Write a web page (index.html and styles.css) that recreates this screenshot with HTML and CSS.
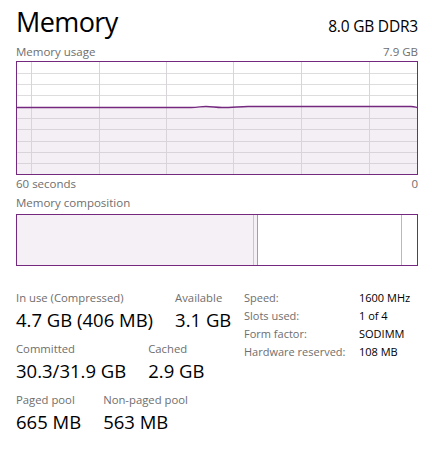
FILE: index.html
```html
<!DOCTYPE html>
<html>
<head>
<meta charset="utf-8">
<link rel="stylesheet" href="styles.css">
</head>
<body>
<div class="page">
  <div class="header">
    <div class="title">Memory</div>
    <div class="spec">8.0 GB DDR3</div>
  </div>
  <div class="caption-row">
    <span>Memory usage</span>
    <span>7.9 GB</span>
  </div>
  <svg class="graph" width="402" height="114" viewBox="0 0 402 114">
    <g stroke="#dedcdf" stroke-width="1">
      <line x1="0" y1="12.5" x2="402" y2="12.5"/>
      <line x1="0" y1="23.5" x2="402" y2="23.5"/>
      <line x1="0" y1="34.5" x2="402" y2="34.5"/>
      <line x1="0" y1="57.5" x2="402" y2="57.5"/>
      <line x1="0" y1="68.5" x2="402" y2="68.5"/>
      <line x1="0" y1="80.5" x2="402" y2="80.5"/>
      <line x1="0" y1="91.5" x2="402" y2="91.5"/>
      <line x1="0" y1="102.5" x2="402" y2="102.5"/>
    </g>
    <path d="M1 46.5 L175 46.5 C182 46.5 185 45.5 190 45.5 C196 45.5 200 46.5 206 46.5 C215 46.5 222 45.8 232 45.5 L395 45.5 C398 45.5 399 46 401 46.5 L401 113 L1 113 Z" fill="#f3eff4"/>
    <g stroke="#d8d4da" stroke-width="1">
      <line x1="15.5" y1="0" x2="15.5" y2="114"/>
      <line x1="83.5" y1="0" x2="83.5" y2="114"/>
      <line x1="150.5" y1="0" x2="150.5" y2="114"/>
      <line x1="217.5" y1="0" x2="217.5" y2="114"/>
      <line x1="285.5" y1="0" x2="285.5" y2="114"/>
      <line x1="353.5" y1="0" x2="353.5" y2="114"/>
    </g>
    <g stroke="#d8d4da" stroke-width="1">
      <line x1="0" y1="57.5" x2="402" y2="57.5"/>
      <line x1="0" y1="68.5" x2="402" y2="68.5"/>
      <line x1="0" y1="80.5" x2="402" y2="80.5"/>
      <line x1="0" y1="91.5" x2="402" y2="91.5"/>
      <line x1="0" y1="102.5" x2="402" y2="102.5"/>
    </g>
    <path d="M1 46.5 L175 46.5 C182 46.5 185 45.5 190 45.5 C196 45.5 200 46.5 206 46.5 C215 46.5 222 45.8 232 45.5 L395 45.5 C398 45.5 399 46 401 46.5" fill="none" stroke="#74297f" stroke-width="1.3"/>
    <rect x="0.5" y="0.5" width="401" height="113" fill="none" stroke="#74297f" stroke-width="1"/>
  </svg>
  <div class="caption-row axis">
    <span>60 seconds</span>
    <span>0</span>
  </div>
  <div class="caption-row comp-title">
    <span>Memory composition</span>
  </div>
  <div class="composition">
    <div class="seg inuse"></div>
    <div class="seg modified"></div>
    <div class="seg standby"></div>
    <div class="seg free"></div>
  </div>
  <div class="details">
    <div class="stats">
      <div class="stat-row">
        <div class="stat"><div class="stat-label">In use (Compressed)</div><div class="stat-value">4.7 GB (406 MB)</div></div>
        <div class="stat"><div class="stat-label">Available</div><div class="stat-value">3.1 GB</div></div>
      </div>
      <div class="stat-row">
        <div class="stat"><div class="stat-label">Committed</div><div class="stat-value">30.3/31.9 GB</div></div>
        <div class="stat"><div class="stat-label">Cached</div><div class="stat-value">2.9 GB</div></div>
      </div>
      <div class="stat-row">
        <div class="stat"><div class="stat-label">Paged pool</div><div class="stat-value">665 MB</div></div>
        <div class="stat"><div class="stat-label">Non-paged pool</div><div class="stat-value">563 MB</div></div>
      </div>
    </div>
    <div class="props">
      <div class="prop-label">Speed:</div><div class="prop-value">1600 MHz</div>
      <div class="prop-label">Slots used:</div><div class="prop-value">1 of 4</div>
      <div class="prop-label">Form factor:</div><div class="prop-value">SODIMM</div>
      <div class="prop-label">Hardware reserved:</div><div class="prop-value">108 MB</div>
    </div>
  </div>
</div>
</body>
</html>
```

FILE: styles.css
```css
html, body {
  margin: 0;
  padding: 0;
  background: #ffffff;
}

body {
  font-family: "Open Sans", "Noto Sans", "DejaVu Sans", sans-serif;
  color: #000000;
}

.page {
  width: 402px;
  padding: 5px 14px 0 16px;
}

.header {
  display: flex;
  justify-content: space-between;
  align-items: baseline;
  height: 34px;
}

.title {
  font-size: 27px;
  line-height: 34px;
  letter-spacing: -0.6px;
}

.spec {
  font-size: 15.5px;
  line-height: 34px;
  letter-spacing: -0.2px;
}

.caption-row {
  display: flex;
  justify-content: space-between;
  font-size: 11.5px;
  line-height: 15px;
  color: #6e6e6e;
  margin-top: 5px;
}

.graph {
  display: block;
  margin-top: 2px;
}

.caption-row.axis {
  margin-top: 1px;
}

.caption-row.comp-title {
  margin-top: 4px;
}

.composition {
  display: flex;
  margin-top: 4px;
  height: 50px;
  border: 1px solid #74297f;
}

.seg {
  height: 100%;
}

.inuse {
  width: 236px;
  background: #f4f0f5;
}

.modified {
  width: 3px;
  background: #f4f0f5;
  border-left: 1px solid #dcb6e4;
  border-right: 1px solid #b98cc6;
}

.standby {
  flex: 1;
}

.free {
  width: 15px;
  border-left: 1px solid #b9b9b9;
}

.details {
  display: flex;
  margin-top: 24px;
}

.stats {
  width: 228px;
  display: flex;
  flex-direction: column;
  gap: 10px;
}

.stat-row {
  display: flex;
  gap: 22px;
}

.stat-label {
  font-size: 11.3px;
  line-height: 15px;
  color: #6e6e6e;
}

.stat-value {
  font-size: 18.5px;
  line-height: 22px;
  margin-top: 4px;
}

.props {
  display: grid;
  grid-template-columns: 115px auto;
  row-gap: 3px;
  align-content: start;
  font-size: 11px;
  line-height: 15px;
}

.prop-label {
  color: #6e6e6e;
}

.prop-value {
  color: #000000;
}
```
